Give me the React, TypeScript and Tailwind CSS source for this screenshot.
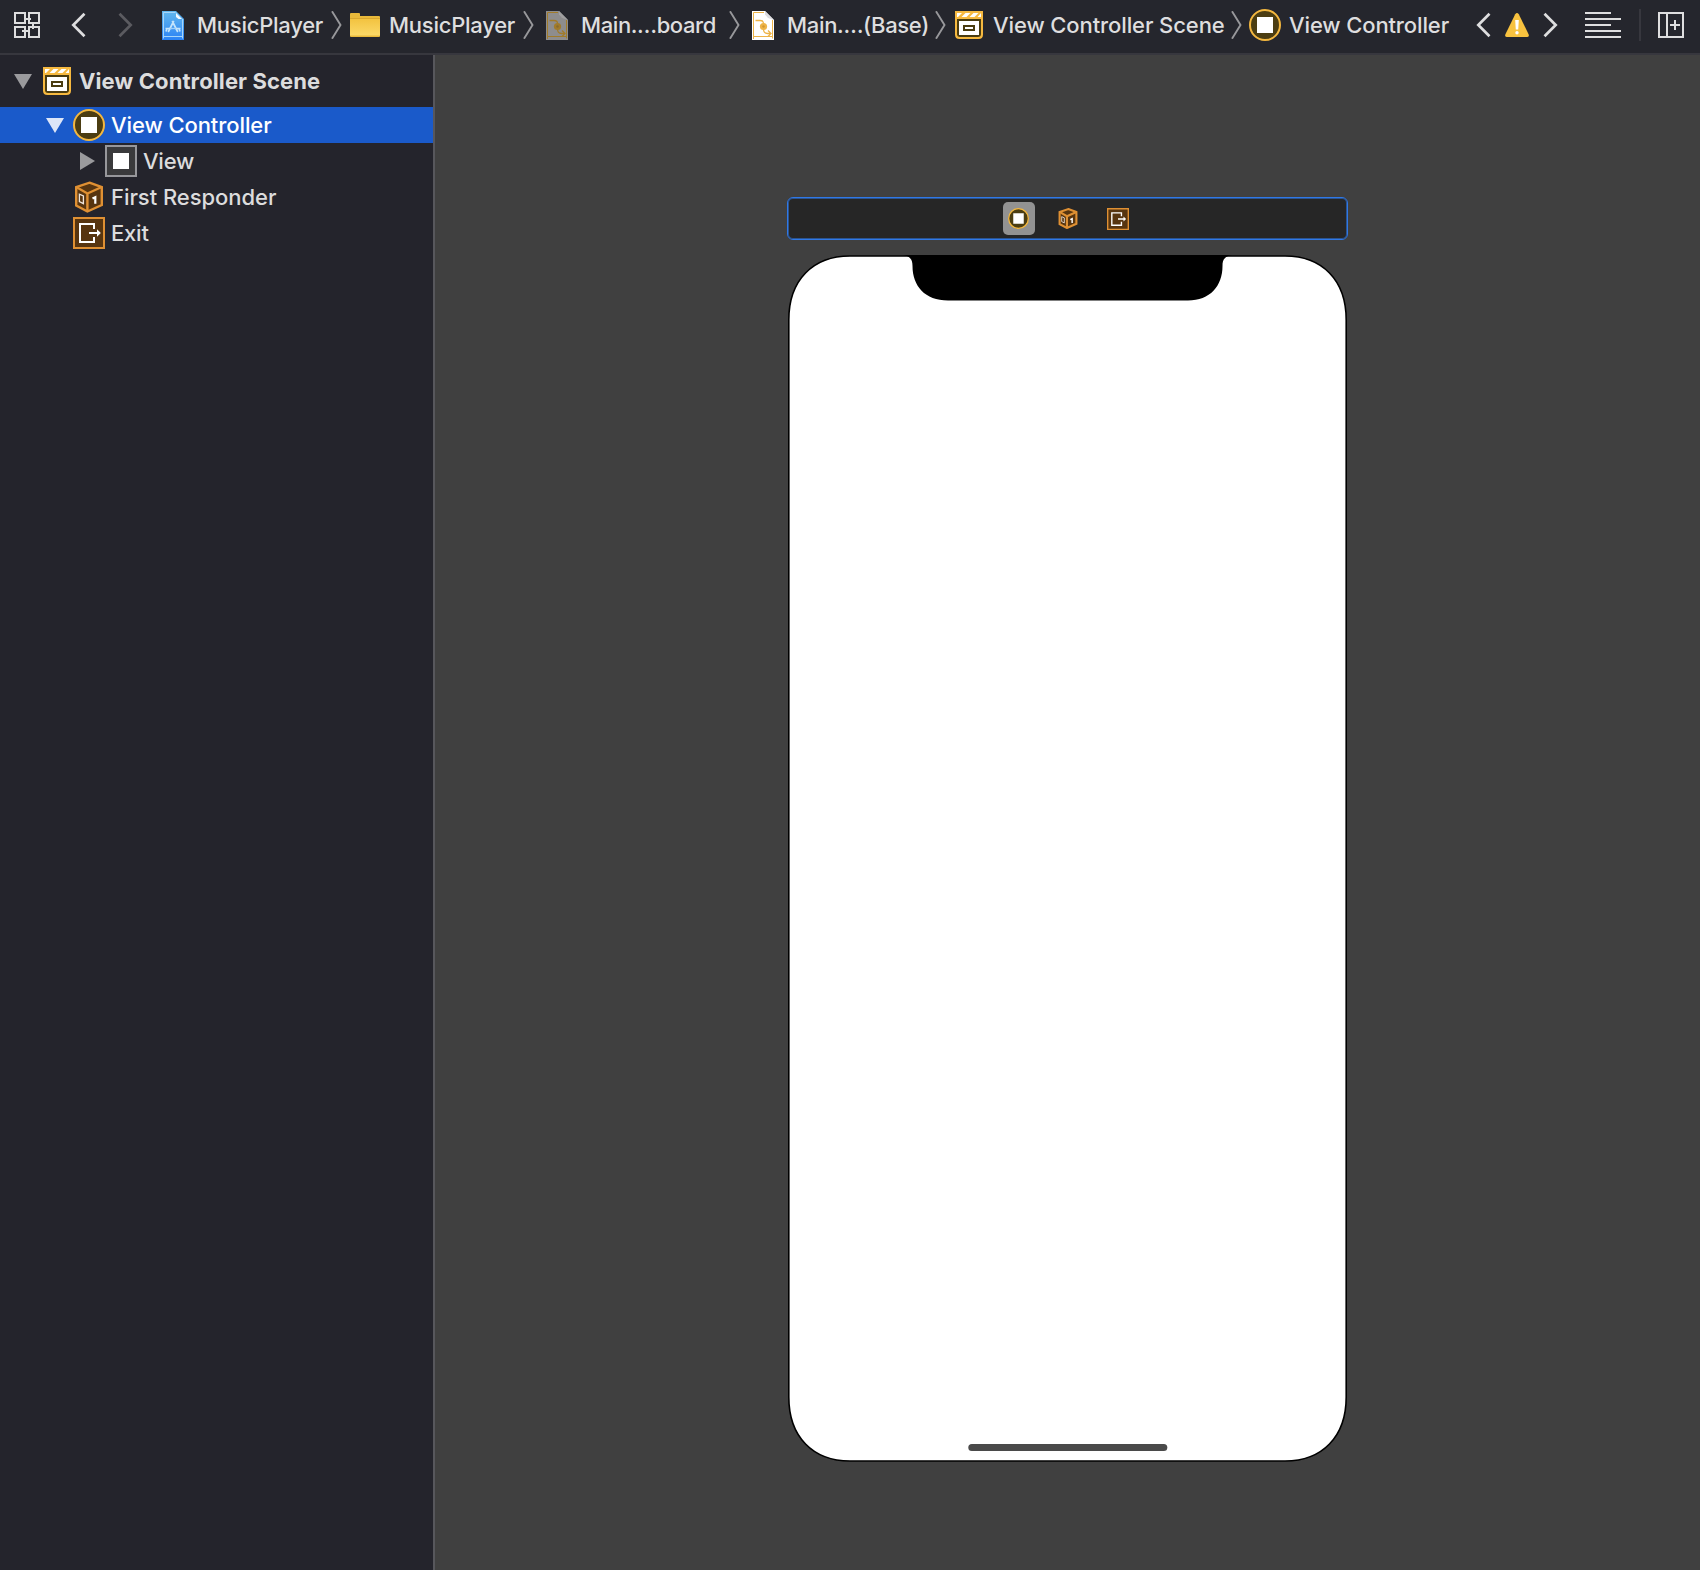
import React from "react";

type IconProps = { className?: string };

function GridIcon() {
  return (
    <svg className="h-[26px] w-[26px] shrink-0" viewBox="0 0 26 26" fill="none" stroke="#dededf" strokeWidth="2">
      <path d="M1 1h10v10H1zM15 1h10v10H15zM1 15h10v10H1zM15 15h10v10H15z" />
      <path d="M11 7h6M19 11v6M9 19h6M9 19h-1" />
    </svg>
  );
}

function Chevron({ dir, className = "" }: { dir: "left" | "right"; className?: string }) {
  return (
    <svg className={`h-[26px] w-[15px] shrink-0 ${className}`} viewBox="0 0 15 26" fill="none" stroke="currentColor" strokeWidth="2.700">
      <path d={dir === "left" ? "M13.500 1.800 2.300 13 13.500 24.200" : "M1.500 1.800 12.700 13 1.500 24.200"} />
    </svg>
  );
}

function Separator({ className = "" }: IconProps) {
  return (
    <svg className={`h-7 w-[11px] shrink-0 ${className}`} viewBox="0 0 11 28" fill="none" stroke="#98989b" strokeWidth="1.900">
      <path d="M1 .3 9.500 14 1 27.700" />
    </svg>
  );
}

function ProjectIcon({ className = "" }: IconProps) {
  return (
    <svg className={`h-[29px] w-[22px] shrink-0 ${className}`} viewBox="0 0 22 29" fill="none">
      <defs>
        <linearGradient id="proj" x1="0" y1="0" x2="0" y2="1">
          <stop offset="0" stopColor="#62b8ee" />
          <stop offset="1" stopColor="#2b83f5" />
        </linearGradient>
      </defs>
      <path d="M0 0h14l8 8v21H0z" fill="url(#proj)" />
      <path d="M1.500 27.500v-26h12M20.500 8v19.500M1.500 25.500h19" stroke="#a5d5fa" strokeWidth="1" />
      <path d="M14 2l6 6h-3.500L14 6z" fill="#f5faff" />
      <path d="M11.800 10 6.200 21M10.200 10l5.600 11M3.500 17.500h6M13 17.500h5.500M4 20.500l1-3M18 20.500l-1-3" stroke="#c4e4fb" strokeWidth="1.700" />
      <path d="M8 17.500h6" stroke="#9ed0f8" strokeWidth="1.300" />
    </svg>
  );
}

function FolderIcon({ className = "" }: IconProps) {
  return (
    <svg className={`h-6 w-[30px] shrink-0 ${className}`} viewBox="0 0 30 24">
      <defs>
        <linearGradient id="folder" x1="0" y1="0" x2="0" y2="1">
          <stop offset="0" stopColor="#f3c340" />
          <stop offset="1" stopColor="#fbd968" />
        </linearGradient>
      </defs>
      <path d="M0 1q0-1 1-1h8q1 0 1 1v2h19q1 0 1 1v19q0 1-1 1H1q-1 0-1-1z" fill="#e9b93a" />
      <path d="M0 6h30v16.500H0z" fill="url(#folder)" />
      <path d="M0 5.500h30" stroke="#d9a72e" strokeWidth="1" />
    </svg>
  );
}

function StoryboardFile({ dim = false, className = "" }: { dim?: boolean; className?: string }) {
  const paper = dim ? "#8e8d8d" : "#ffffff";
  const fold = dim ? "#a09fa0" : "#dcdce0";
  const ink = dim ? "#a17b2a" : "#edb347";
  return (
    <svg className={`h-[29px] w-[22px] shrink-0 ${className}`} viewBox="0 0 22 29" fill="none">
      <path d="M0 0h13l9 9v20H0z" fill={paper} />
      <path d="M13 0v3.500l3 3.500 6 2z" fill={fold} />
      <path d="M1.500 28V1.500H12M20.500 9v18.500M1 25.500h20" stroke={ink} strokeWidth="1" />
      <path d="M3.500 9.500h4.500q3.500 0 3.500 3V18q0 4.500 4 4.500h3.500M16 19.500l3 3-3 3" stroke={ink} strokeWidth="1.300" />
      <circle cx="11.500" cy="15.500" r="3.600" fill={ink} />
      <circle cx="11.500" cy="15.500" r="1.200" fill={dim ? "#866a30" : "#cf9633"} />
    </svg>
  );
}

function SceneIcon({ className = "" }: IconProps) {
  return (
    <svg className={`h-7 w-7 shrink-0 ${className}`} viewBox="0 0 28 28">
      <path d="M0 0h28v23.500q0 4.500-4.500 4.500h-19Q0 28 0 23.500z" fill="#f6b940" />
      <path d="M2 2h5L3 6H2zM10.500 2h5l-4 4h-5zM18.500 2h5l-4 4h-5zM26 2v4h-3.500z" fill="#fff" />
      <path d="M2 8h24v15q0 3-3 3H5q-3 0-3-3z" fill="#4a3c10" />
      <path d="M4 10h20v14H4z" fill="#fff" />
      <path d="M9 15h10v4H9z" fill="#fff" stroke="#4a3c10" strokeWidth="2" />
    </svg>
  );
}

function ControllerIcon({ className = "h-8 w-8" }: IconProps) {
  return (
    <svg className={`shrink-0 ${className}`} viewBox="0 0 32 32">
      <circle cx="16" cy="16" r="15" fill="#4b3d12" stroke="#f3b73f" strokeWidth="2" />
      <path d="M8 8h16v16H8z" fill="#fff" />
    </svg>
  );
}

function CubeIcon({ className = "h-8 w-7", line = 2.4 }: IconProps & { line?: number }) {
  return (
    <svg className={`shrink-0 ${className}`} viewBox="0 0 28 32" strokeLinejoin="miter">
      <path d="M14.500 1.700 26.800 6v18L12.400 30.500 1.200 24.500V6z" fill="#573510" stroke="#df9033" strokeWidth={line} />
      <path d="M1.200 6 12.400 12.500 26.800 6M12.400 12.500V30" fill="none" stroke="#df9033" strokeWidth={line} />
      <path d="M4.400 13.200v7.500l4 2v-7.700z" fill="none" stroke="#efe5dc" strokeWidth="1.300" />
      <path d="M17.500 17.600 20.300 16.200v6.600" fill="none" stroke="#fff" strokeWidth="2.200" />
    </svg>
  );
}

function ExitIcon({ className = "h-8 w-8" }: IconProps) {
  return (
    <svg className={`shrink-0 ${className}`} viewBox="0 0 32 32" fill="none">
      <path d="M1 1h30v30H1z" fill="#573510" stroke="#df9033" strokeWidth="2" />
      <path d="M21 12V7H7v18h14v-5M16 16h9" stroke="#fff" strokeWidth="2" />
      <path d="M24 12.200 27.800 16 24 19.800z" fill="#fff" />
    </svg>
  );
}

function WarningIcon({ className = "" }: IconProps) {
  return (
    <svg className={`h-6 w-6 shrink-0 ${className}`} viewBox="0 0 24 24">
      <path d="M10.200 1.200Q12-1 13.800 1.200L23.700 21.500Q24.300 24 22 24H2Q-.3 24 .3 21.500z" fill="#f8c23f" />
      <path d="M10.200 7h3.600l-.6 9.500h-2.400z" fill="#fff" />
      <circle cx="12" cy="19.700" r="1.700" fill="#fff" />
    </svg>
  );
}

function LinesIcon({ className = "" }: IconProps) {
  return (
    <svg className={`h-[26px] w-9 shrink-0 ${className}`} viewBox="0 0 36 26" stroke="#dededf" strokeWidth="2">
      <path d="M0 1h26M0 7h36M0 13h26M0 19h36M0 25h36" />
    </svg>
  );
}

function AddEditorIcon({ className = "" }: IconProps) {
  return (
    <svg className={`h-[26px] w-[26px] shrink-0 ${className}`} viewBox="0 0 26 26" fill="none" stroke="#dededf" strokeWidth="2">
      <path d="M1 1h24v24H1zM9 1v24M12 13h10M17 8v10" />
    </svg>
  );
}

function Disclosure({ open, className = "" }: { open: boolean; className?: string }) {
  return open ? (
    <svg className={`h-[15px] w-[18px] shrink-0 ${className}`} viewBox="0 0 18 15" fill="currentColor">
      <path d="M0 0h18L9 15z" />
    </svg>
  ) : (
    <svg className={`h-[18px] w-[15px] shrink-0 ${className}`} viewBox="0 0 15 18" fill="currentColor">
      <path d="M0 0v18l15-9z" />
    </svg>
  );
}

function JumpBar() {
  return (
    <header className="flex h-[55px] shrink-0 items-center border-b-2 border-[#37373e] bg-[#25262d] pb-[3px] pl-[14px] text-[#dededf]">
      <GridIcon />
      <Chevron dir="left" className="ml-[31px]" />
      <Chevron dir="right" className="ml-8 text-[#5b5b60]" />
      <ProjectIcon className="ml-[29px]" />
      <span className="ml-[13px] w-[134px] tracking-[-0.25px]">MusicPlayer</span>
      <Separator />
      <FolderIcon className="ml-2" />
      <span className="ml-[9px] w-[134px] tracking-[-0.25px]">MusicPlayer</span>
      <Separator />
      <StoryboardFile dim className="ml-[12px]" />
      <span className="ml-[13px] w-[148px] tracking-[-0.4px]">Main.…board</span>
      <Separator />
      <StoryboardFile className="ml-[12px]" />
      <span className="ml-[13px] w-[148px] tracking-[-0.32px]">Main.…(Base)</span>
      <Separator />
      <SceneIcon className="ml-[9px]" />
      <span className="ml-[10px] w-[238px] tracking-[-0.1px]">View Controller Scene</span>
      <Separator />
      <ControllerIcon className="ml-[7px] h-8 w-8" />
      <span className="ml-2 w-[187px] tracking-[-0.12px]">View Controller</span>
      <Chevron dir="left" />
      <WarningIcon className="ml-[14px]" />
      <Chevron dir="right" className="ml-[14px]" />
      <LinesIcon className="ml-[27px]" />
      <div className="ml-[18px] h-8 w-0.5 bg-[#37373e]" />
      <AddEditorIcon className="ml-[17px]" />
    </header>
  );
}

function Outline() {
  return (
    <aside className="flex w-[435px] shrink-0 flex-col border-r-2 border-[#57575c] bg-[#24242c] text-[#dcdcdd]">
      <div className="flex h-[52px] items-center pl-[14px]">
        <Disclosure open className="text-[#9a9a9d]" />
        <SceneIcon className="ml-[11px]" />
        <span className="ml-2 font-bold tracking-[0.11px]">View Controller Scene</span>
      </div>
      <div className="flex h-9 items-center bg-[#1a5aca] pl-[46px] text-white">
        <Disclosure open className="text-[#dde6f8]" />
        <ControllerIcon className="ml-[9px] h-8 w-8" />
        <span className="ml-[6px] tracking-[-0.08px]">View Controller</span>
      </div>
      <div className="flex h-9 items-center pl-20">
        <Disclosure open={false} className="text-[#9a9a9d]" />
        <span className="ml-[10px] flex h-8 w-8 items-center justify-center border-2 border-[#97979b] bg-[#3a3a3c]">
          <span className="h-4 w-4 bg-white" />
        </span>
        <span className="ml-[6px] tracking-[-0.25px]">View</span>
      </div>
      <div className="flex h-9 items-center pl-[75px]">
        <CubeIcon />
        <span className="ml-2 tracking-[-0.05px]">First Responder</span>
      </div>
      <div className="flex h-9 items-center pl-[73px]">
        <ExitIcon />
        <span className="ml-[6px] tracking-[-0.2px]">Exit</span>
      </div>
    </aside>
  );
}

function Device() {
  return (
    <svg className="mt-[15px] h-[1207px] w-[559px] shrink-0" viewBox="0 0 559 1207">
      <path
        d="M62 1H497C534 1 558.200 25 558.200 65V1142C558.200 1182 534 1206 497 1206H62C25 1206 .8 1182 .8 1142V65C.8 25 25 1 62 1z"
        fill="#fff"
        stroke="#000"
        strokeWidth="1.600"
      />
      <path d="M115 0C122 1.500 124.500 4 124.500 11C124.500 31 137 45.500 160 45.500H400C422 45.500 434.500 31 434.500 11C434.500 4 437 1.500 444 0z" fill="#000" />
      <rect x="180.300" y="1189" width="199" height="7" rx="3.500" fill="#4a4a4a" />
    </svg>
  );
}

function Canvas() {
  return (
    <main className="flex flex-1 flex-col items-center bg-[#404040] pt-[142px]">
      <div className="flex h-[43px] w-[561px] shrink-0 items-center rounded-md border border-[#2f78e6] bg-[#262626] pl-[215px] inset-shadow-[0_0_0_1px_#2b5490]">
        <div className="flex h-[33px] w-8 items-center justify-center rounded-[5px] bg-[#929292] pr-px">
          <ControllerIcon className="h-[21px] w-[21px]" />
        </div>
        <CubeIcon className="ml-[23px] h-[21px] w-5" line={3.2} />
        <ExitIcon className="ml-[29px] h-[22px] w-[22px]" />
      </div>
      <Device />
    </main>
  );
}

export default function App() {
  return (
    <div className="flex h-[1570px] w-[1700px] flex-col overflow-hidden whitespace-nowrap font-['Inter',sans-serif] text-[22px] leading-7 font-[450]">
      <JumpBar />
      <div className="flex min-h-0 flex-1">
        <Outline />
        <Canvas />
      </div>
    </div>
  );
}
